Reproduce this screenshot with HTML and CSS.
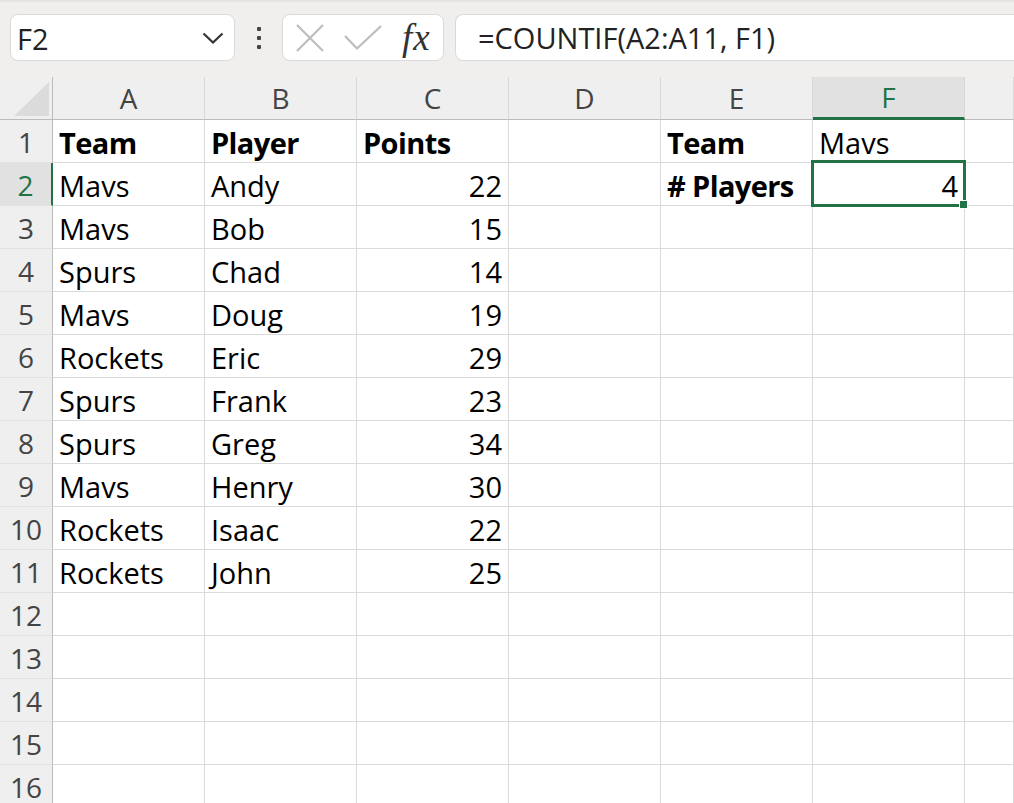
FILE: index.html
```html
<!DOCTYPE html>
<html lang="en">
<head>
  <meta charset="UTF-8" />
  <meta name="viewport" content="width=device-width, initial-scale=1.0"/>
  <title>COUNTIF example</title>
  <link rel="stylesheet" href="styles.css">
</head>
<body>
  <div class="toolbar">
    <div class="namebox">
      <span>F2</span>
      <svg class="chevron" width="22" height="12" viewBox="0 0 22 12"><path d="M1.5 1.5 L11 10.5 L20.5 1.5" fill="none" stroke="#333" stroke-width="2.2"/></svg>
    </div>
    <div class="grip"><i></i><i></i><i></i></div>
    <div class="fxbox">
      <svg width="28" height="28" viewBox="0 0 28 28"><path d="M1 1 L27 27 M27 1 L1 27" stroke="#bdbdbd" stroke-width="2.2"/></svg>
      <svg width="38" height="26" viewBox="0 0 38 26"><path d="M1 11 L13 23.5 L37 1" fill="none" stroke="#bdbdbd" stroke-width="2.2"/></svg>
      <span class="fx">fx</span>
    </div>
    <div class="formula">=COUNTIF(A2:A11, F1)</div>
  </div>

  <div class="sheet">
    <div class="row head">
      <div class="corner"><span class="tri"></span></div>
      <div class="col">A</div>
      <div class="col">B</div>
      <div class="col">C</div>
      <div class="col">D</div>
      <div class="col">E</div>
      <div class="col sel">F</div>
      <div class="col"></div>
    </div>

    <div class="row">
      <div class="rn">1</div>
      <div class="c b">Team</div>
      <div class="c b">Player</div>
      <div class="c b">Points</div>
      <div class="c"></div>
      <div class="c b">Team</div>
      <div class="c">Mavs</div>
      <div class="c"></div>
    </div>
    <div class="row">
      <div class="rn sel">2</div>
      <div class="c">Mavs</div>
      <div class="c">Andy</div>
      <div class="c num">22</div>
      <div class="c"></div>
      <div class="c b">#&nbsp;Players</div>
      <div class="c num active">4<span class="handle"></span></div>
      <div class="c"></div>
    </div>
    <div class="row">
      <div class="rn">3</div>
      <div class="c">Mavs</div>
      <div class="c">Bob</div>
      <div class="c num">15</div>
      <div class="c"></div><div class="c"></div><div class="c"></div><div class="c"></div>
    </div>
    <div class="row">
      <div class="rn">4</div>
      <div class="c">Spurs</div>
      <div class="c">Chad</div>
      <div class="c num">14</div>
      <div class="c"></div><div class="c"></div><div class="c"></div><div class="c"></div>
    </div>
    <div class="row">
      <div class="rn">5</div>
      <div class="c">Mavs</div>
      <div class="c">Doug</div>
      <div class="c num">19</div>
      <div class="c"></div><div class="c"></div><div class="c"></div><div class="c"></div>
    </div>
    <div class="row">
      <div class="rn">6</div>
      <div class="c">Rockets</div>
      <div class="c">Eric</div>
      <div class="c num">29</div>
      <div class="c"></div><div class="c"></div><div class="c"></div><div class="c"></div>
    </div>
    <div class="row">
      <div class="rn">7</div>
      <div class="c">Spurs</div>
      <div class="c">Frank</div>
      <div class="c num">23</div>
      <div class="c"></div><div class="c"></div><div class="c"></div><div class="c"></div>
    </div>
    <div class="row">
      <div class="rn">8</div>
      <div class="c">Spurs</div>
      <div class="c">Greg</div>
      <div class="c num">34</div>
      <div class="c"></div><div class="c"></div><div class="c"></div><div class="c"></div>
    </div>
    <div class="row">
      <div class="rn">9</div>
      <div class="c">Mavs</div>
      <div class="c">Henry</div>
      <div class="c num">30</div>
      <div class="c"></div><div class="c"></div><div class="c"></div><div class="c"></div>
    </div>
    <div class="row">
      <div class="rn">10</div>
      <div class="c">Rockets</div>
      <div class="c">Isaac</div>
      <div class="c num">22</div>
      <div class="c"></div><div class="c"></div><div class="c"></div><div class="c"></div>
    </div>
    <div class="row">
      <div class="rn">11</div>
      <div class="c">Rockets</div>
      <div class="c">John</div>
      <div class="c num">25</div>
      <div class="c"></div><div class="c"></div><div class="c"></div><div class="c"></div>
    </div>
    <div class="row">
      <div class="rn">12</div>
      <div class="c"></div><div class="c"></div><div class="c"></div><div class="c"></div><div class="c"></div><div class="c"></div><div class="c"></div>
    </div>
    <div class="row">
      <div class="rn">13</div>
      <div class="c"></div><div class="c"></div><div class="c"></div><div class="c"></div><div class="c"></div><div class="c"></div><div class="c"></div>
    </div>
    <div class="row">
      <div class="rn">14</div>
      <div class="c"></div><div class="c"></div><div class="c"></div><div class="c"></div><div class="c"></div><div class="c"></div><div class="c"></div>
    </div>
    <div class="row">
      <div class="rn">15</div>
      <div class="c"></div><div class="c"></div><div class="c"></div><div class="c"></div><div class="c"></div><div class="c"></div><div class="c"></div>
    </div>
    <div class="row">
      <div class="rn">16</div>
      <div class="c"></div><div class="c"></div><div class="c"></div><div class="c"></div><div class="c"></div><div class="c"></div><div class="c"></div>
    </div>
  </div>
</body>
</html>
```

FILE: styles.css
```css
body {
  margin: 0;
  width: 1014px;
  height: 803px;
  overflow: hidden;
  background: #fff;
  font-family: 'Open Sans', 'Noto Sans', sans-serif;
  color: #000;
}

/* formula bar */
.toolbar {
  height: 77px;
  box-sizing: border-box;
  background: #f1efed;
  border-top: 2px solid #e6e4e2;
  display: flex;
  align-items: flex-start;
  padding: 12px 0 0 10px;
}

.namebox,
.fxbox,
.formula {
  height: 47px;
  box-sizing: border-box;
  background: #fff;
  border: 1px solid #dcdad8;
  border-radius: 8px;
}

.namebox {
  width: 225px;
  display: flex;
  align-items: center;
  justify-content: space-between;
  padding: 0 10px 0 6px;
  font-size: 29px;
  color: #222;
}

.namebox span {
  line-height: 45px;
  padding-top: 1px;
}

.grip {
  width: 47px;
  height: 47px;
  display: flex;
  flex-direction: column;
  align-items: center;
  justify-content: center;
  gap: 5px;
}

.grip i {
  width: 4px;
  height: 4px;
  background: #444;
  border-radius: 1px;
}

.fxbox {
  width: 162px;
  display: flex;
  align-items: center;
  padding: 0 0 0 13px;
  gap: 20px;
}

.fx {
  font-family: 'Liberation Serif', serif;
  font-style: italic;
  font-size: 37px;
  line-height: 40px;
  color: #333;
  letter-spacing: 1px;
}

.formula {
  flex: 1;
  margin-left: 11px;
  border-right: none;
  border-radius: 8px 0 0 8px;
  padding: 1px 0 0 22px;
  font-size: 29px;
  line-height: 44px;
  color: #222;
}

/* grid */
.row {
  display: grid;
  grid-template-columns: 53px repeat(6, 152px) 1fr;
  height: 43px;
}

.row > div {
  box-sizing: border-box;
  border-right: 1px solid #dadada;
  border-bottom: 1px solid #dadada;
  height: 43px;
  white-space: nowrap;
}

.head > div {
  background: #efefef;
  border-right-color: #d8d8d8;
  border-bottom-color: #bcbcbc;
  text-align: center;
  font-size: 28px;
  line-height: 43px;
  color: #444;
}

.head .corner {
  position: relative;
  border-right-color: #bcbcbc;
}

.tri {
  position: absolute;
  right: 3px;
  bottom: 3px;
  width: 0;
  height: 0;
  border-left: 35px solid transparent;
  border-bottom: 34px solid #dbdbdb;
}

.head .sel {
  background: #e1e1e1;
  color: #217346;
  border-bottom: 3px solid #217346;
  line-height: 41px;
}

.rn {
  background: #efefef;
  text-align: center;
  font-size: 28px;
  line-height: 44px;
  color: #444;
  border-right-color: #bcbcbc !important;
  border-bottom-color: #e2e2e2 !important;
}

.rn.sel {
  background: #e1e1e1;
  color: #217346;
  border-right: 2px solid #217346 !important;
}

.c {
  font-size: 29px;
  line-height: 45px;
  padding: 0 6px;
}

.b {
  font-weight: 700;
  letter-spacing: -0.6px;
}

.num {
  text-align: right;
}

.active {
  position: relative;
}

.active::after {
  content: '';
  position: absolute;
  left: -2px;
  top: -3px;
  right: -2px;
  bottom: -2px;
  border: 3px solid #217346;
}

.handle {
  position: absolute;
  right: -4px;
  bottom: -4px;
  width: 7px;
  height: 7px;
  background: #217346;
  border: 1px solid #fff;
  z-index: 2;
}
```
